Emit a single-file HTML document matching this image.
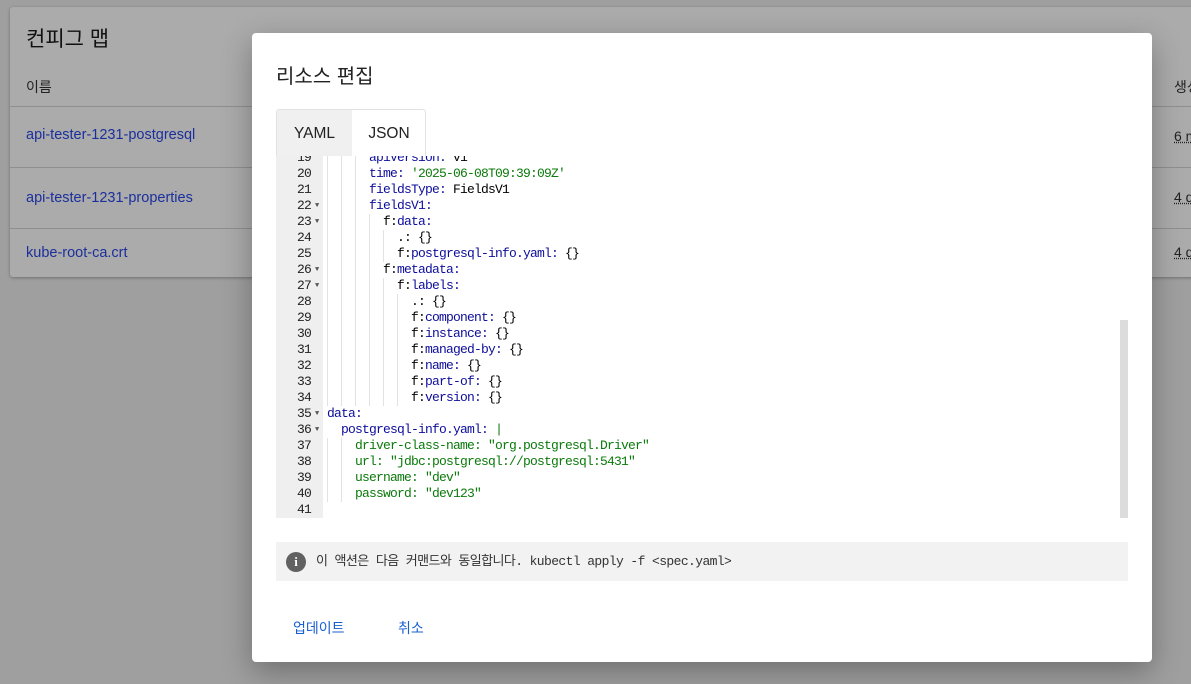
<!DOCTYPE html>
<html><head><meta charset="utf-8"><style>
*{margin:0;padding:0;box-sizing:border-box}
body{width:1191px;height:684px;overflow:hidden;background:#9f9f9f;font-family:"Liberation Sans","Noto Sans CJK KR",sans-serif;position:relative}
.card{position:absolute;left:10px;top:7px;width:1200px;height:270px;background:#ababab;box-shadow:0 1px 3px rgba(0,0,0,.3);border-radius:3px}
.card h1{position:absolute;left:16px;top:16px;font-size:21px;font-weight:normal;color:#111}
.card .hd{position:absolute;left:16px;top:70px;font-size:14px;color:#222}
.row{position:absolute;left:0;width:100%;border-top:1px solid #8f8f8f}
.row a{position:absolute;left:16px;font-size:14.5px;color:#1b2f9c;text-decoration:none}
.r{position:absolute;left:1174px;font-size:14px;color:#222;text-decoration:underline dotted;white-space:nowrap}
.modal{position:absolute;left:252px;top:33px;width:900px;height:629px;background:#fff;border-radius:4px;box-shadow:0 10px 30px rgba(0,0,0,.3)}
.title{position:absolute;left:24px;top:27px;font-size:20px;color:#222}
.tabs{position:absolute;left:24px;top:76px;height:47px;width:150px;border:1px solid #e2e2e2;border-bottom:none;border-radius:3px 3px 0 0;background:#fff}
.tab{position:absolute;top:0;height:47px;line-height:47px;font-size:15.5px;color:#222;text-align:center}
.ed{position:absolute;left:24px;top:123px;width:852px;height:362px;overflow:hidden;background:#fff}
.gut{position:absolute;left:0;top:0;width:47px;height:100%;background:#efefef}
.lines{position:absolute;left:0;top:-6px;width:100%}
.ln{height:16px;line-height:16px;font-family:"Liberation Mono",monospace;font-size:13px;letter-spacing:-0.8px;white-space:pre;position:relative}
.n{position:absolute;left:0;width:35px;text-align:right;color:#222}
.f{position:absolute;left:39px;top:0;font-size:7px;color:#555;letter-spacing:0}
.c{position:absolute;left:51px;color:#000}
.k{color:#0d0d9c}.s{color:#0b7a0b}
.g{display:inline-block;height:16px;vertical-align:top;background:repeating-linear-gradient(to right,#e2e2e2 0 1px,transparent 1px 14px)}
.sb{position:absolute;left:868px;top:287px;width:8px;height:198px;background:#dcdcdc}
.info{position:absolute;left:24px;top:509px;width:852px;height:39px;background:#f2f2f2;font-family:"Liberation Mono","Noto Sans CJK KR",monospace;font-size:13px;letter-spacing:-0.6px;color:#333;line-height:39px;padding-left:40px}
.ic{position:absolute;left:10px;top:10px;width:20px;height:20px;border-radius:50%;background:#616161;color:#fff;font:bold 13px/20px "Liberation Serif",serif;text-align:center;letter-spacing:0}
.btn{position:absolute;top:585px;font-size:14px;color:#1a5fd0}
</style></head><body>
<div class="card">
<h1>컨피그 맵</h1>
<div class="hd">이름</div>
<div class="row" style="top:99px;height:61px"><a style="top:20px">api-tester-1231-postgresql</a></div>
<div class="row" style="top:160px;height:61px"><a style="top:22px">api-tester-1231-properties</a></div>
<div class="row" style="top:221px;height:49px"><a style="top:16px">kube-root-ca.crt</a></div>
</div>
<div class="r" style="top:77px;text-decoration:none">생성</div>
<div class="r" style="top:128px">6 m</div>
<div class="r" style="top:189px">4 d</div>
<div class="r" style="top:244px">4 d</div>
<div class="modal">
<div class="title">리소스 편집</div>
<div class="tabs"><div class="tab" style="left:0;width:75px;background:#f0f0f0">YAML</div><div class="tab" style="left:75px;width:74px">JSON</div></div>
<div class="ed"><div class="gut"></div><div class="lines">
<div class="ln"><span class="n">19</span><span class="c"><span class="g" style="width:42px"></span><span class="k">apiVersion:</span> v1</span></div>
<div class="ln"><span class="n">20</span><span class="c"><span class="g" style="width:42px"></span><span class="k">time:</span> <span class="s">'2025-06-08T09:39:09Z'</span></span></div>
<div class="ln"><span class="n">21</span><span class="c"><span class="g" style="width:42px"></span><span class="k">fieldsType:</span> FieldsV1</span></div>
<div class="ln"><span class="n">22</span><span class="f">▼</span><span class="c"><span class="g" style="width:42px"></span><span class="k">fieldsV1:</span></span></div>
<div class="ln"><span class="n">23</span><span class="f">▼</span><span class="c"><span class="g" style="width:56px"></span>f:<span class="k">data:</span></span></div>
<div class="ln"><span class="n">24</span><span class="c"><span class="g" style="width:70px"></span>.: {}</span></div>
<div class="ln"><span class="n">25</span><span class="c"><span class="g" style="width:70px"></span>f:<span class="k">postgresql-info.yaml:</span> {}</span></div>
<div class="ln"><span class="n">26</span><span class="f">▼</span><span class="c"><span class="g" style="width:56px"></span>f:<span class="k">metadata:</span></span></div>
<div class="ln"><span class="n">27</span><span class="f">▼</span><span class="c"><span class="g" style="width:70px"></span>f:<span class="k">labels:</span></span></div>
<div class="ln"><span class="n">28</span><span class="c"><span class="g" style="width:84px"></span>.: {}</span></div>
<div class="ln"><span class="n">29</span><span class="c"><span class="g" style="width:84px"></span>f:<span class="k">component:</span> {}</span></div>
<div class="ln"><span class="n">30</span><span class="c"><span class="g" style="width:84px"></span>f:<span class="k">instance:</span> {}</span></div>
<div class="ln"><span class="n">31</span><span class="c"><span class="g" style="width:84px"></span>f:<span class="k">managed-by:</span> {}</span></div>
<div class="ln"><span class="n">32</span><span class="c"><span class="g" style="width:84px"></span>f:<span class="k">name:</span> {}</span></div>
<div class="ln"><span class="n">33</span><span class="c"><span class="g" style="width:84px"></span>f:<span class="k">part-of:</span> {}</span></div>
<div class="ln"><span class="n">34</span><span class="c"><span class="g" style="width:84px"></span>f:<span class="k">version:</span> {}</span></div>
<div class="ln"><span class="n">35</span><span class="f">▼</span><span class="c"><span class="k">data:</span></span></div>
<div class="ln"><span class="n">36</span><span class="f">▼</span><span class="c">  <span class="k">postgresql-info.yaml:</span> <span class="s">|</span></span></div>
<div class="ln"><span class="n">37</span><span class="c"><span class="g" style="width:28px;background-position:14px 0"></span><span class="s">driver-class-name: "org.postgresql.Driver"</span></span></div>
<div class="ln"><span class="n">38</span><span class="c"><span class="g" style="width:28px;background-position:14px 0"></span><span class="s">url: "jdbc:postgresql://postgresql:5431"</span></span></div>
<div class="ln"><span class="n">39</span><span class="c"><span class="g" style="width:28px;background-position:14px 0"></span><span class="s">username: "dev"</span></span></div>
<div class="ln"><span class="n">40</span><span class="c"><span class="g" style="width:28px;background-position:14px 0"></span><span class="s">password: "dev123"</span></span></div>
<div class="ln"><span class="n">41</span></div>
</div></div>
<div class="sb"></div>
<div class="info"><span class="ic">i</span>이 액션은 다음 커맨드와 동일합니다. kubectl apply -f &lt;spec.yaml&gt;</div>
<div class="btn" style="left:41px">업데이트</div>
<div class="btn" style="left:146px">취소</div>
</div>
</body></html>
